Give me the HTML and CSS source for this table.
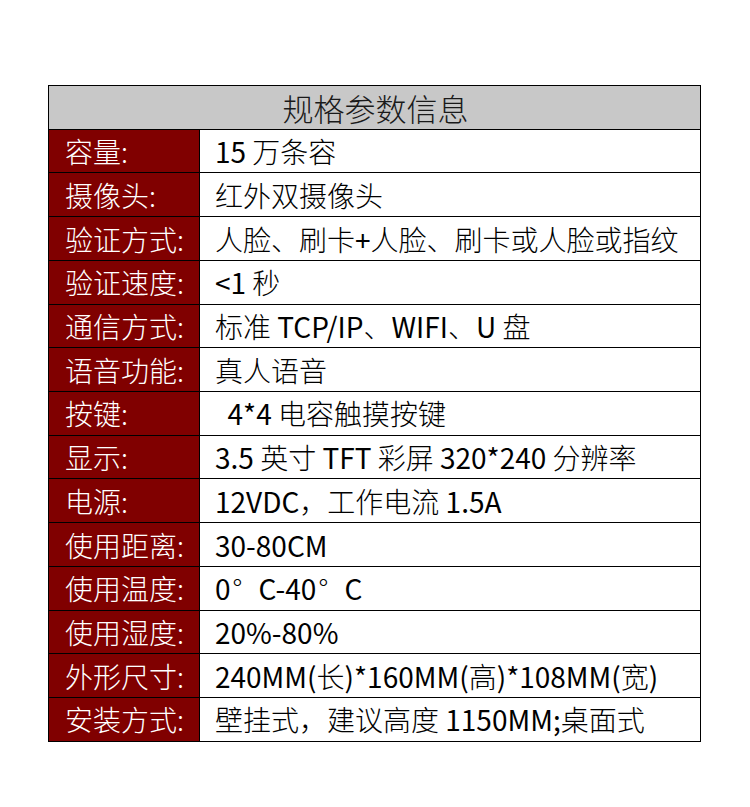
FILE: index.html
```html
<!DOCTYPE html>
<html lang="zh-CN">
<head>
<meta charset="utf-8">
<title>规格参数信息</title>
<link rel="stylesheet" href="styles.css">
</head>
<body>
<div class="spec">
  <div class="head">规格参数信息</div>
  <div class="k">容量:</div><div class="v"><span class="en">15 </span>万条容</div>
  <div class="k">摄像头:</div><div class="v">红外双摄像头</div>
  <div class="k">验证方式:</div><div class="v">人脸、刷卡<span class="en">+</span>人脸、刷卡或人脸或指纹</div>
  <div class="k">验证速度:</div><div class="v"><span class="en">&lt;1 </span>秒</div>
  <div class="k">通信方式:</div><div class="v">标准<span class="en"> TCP/IP</span>、<span class="en">WIFI</span>、<span class="en">U </span>盘</div>
  <div class="k">语音功能:</div><div class="v">真人语音</div>
  <div class="k">按键:</div><div class="v"><span class="en">&nbsp;&nbsp;4*4 </span>电容触摸按键</div>
  <div class="k">显示:</div><div class="v"><span class="en">3.5 </span>英寸<span class="en"> TFT </span>彩屏<span class="en"> 320*240 </span>分辨率</div>
  <div class="k">电源:</div><div class="v"><span class="en">12VDC</span>，工作电流<span class="en"> 1.5A</span></div>
  <div class="k">使用距离:</div><div class="v"><span class="en">30-80CM</span></div>
  <div class="k">使用温度:</div><div class="v"><span class="en">0</span><span class="deg">°</span><span class="en">C-40</span><span class="deg">°</span><span class="en">C</span></div>
  <div class="k">使用湿度:</div><div class="v"><span class="en">20%-80%</span></div>
  <div class="k">外形尺寸:</div><div class="v"><span class="en">240MM(</span>长<span class="en">)*160MM(</span>高<span class="en">)*108MM(</span>宽<span class="en">)</span></div>
  <div class="k">安装方式:</div><div class="v">壁挂式，建议高度<span class="en"> 1150MM;</span>桌面式</div>
</div>
</body>
</html>
```
FILE: styles.css
```css
html, body {
  margin: 0;
  padding: 0;
  background: #ffffff;
}
body {
  font-family: "Noto Sans CJK SC", "Noto Sans", sans-serif;
  font-weight: 300;
}
.spec {
  margin: 85px 0 0 48px;
  width: 653px;
  box-sizing: border-box;
  padding: 1px;
  background: #000000;
  display: grid;
  grid-template-columns: 150px 500px;
  grid-auto-rows: 42.73px;
  gap: 1px;
}
.head {
  grid-column: 1 / 3;
  background: #c8c8c8;
  color: #1a1a1a;
  font-size: 31px;
  display: flex;
  align-items: center;
  justify-content: center;
  line-height: 1;
  padding-left: 2px;
}
.k {
  background: #800000;
  color: #ffffff;
  font-size: 28px;
  line-height: 1;
  display: flex;
  align-items: center;
  padding-left: 16px;
}
.v {
  background: #ffffff;
  color: #000000;
  font-size: 28px;
  line-height: 1;
  display: flex;
  align-items: center;
  padding-left: 15px;
  white-space: pre;
}
.en {
  font-weight: 400;
}
.deg {
  display: inline-block;
  width: 1em;
  text-align: left;
  padding-left: 2px;
  box-sizing: border-box;
}
```
